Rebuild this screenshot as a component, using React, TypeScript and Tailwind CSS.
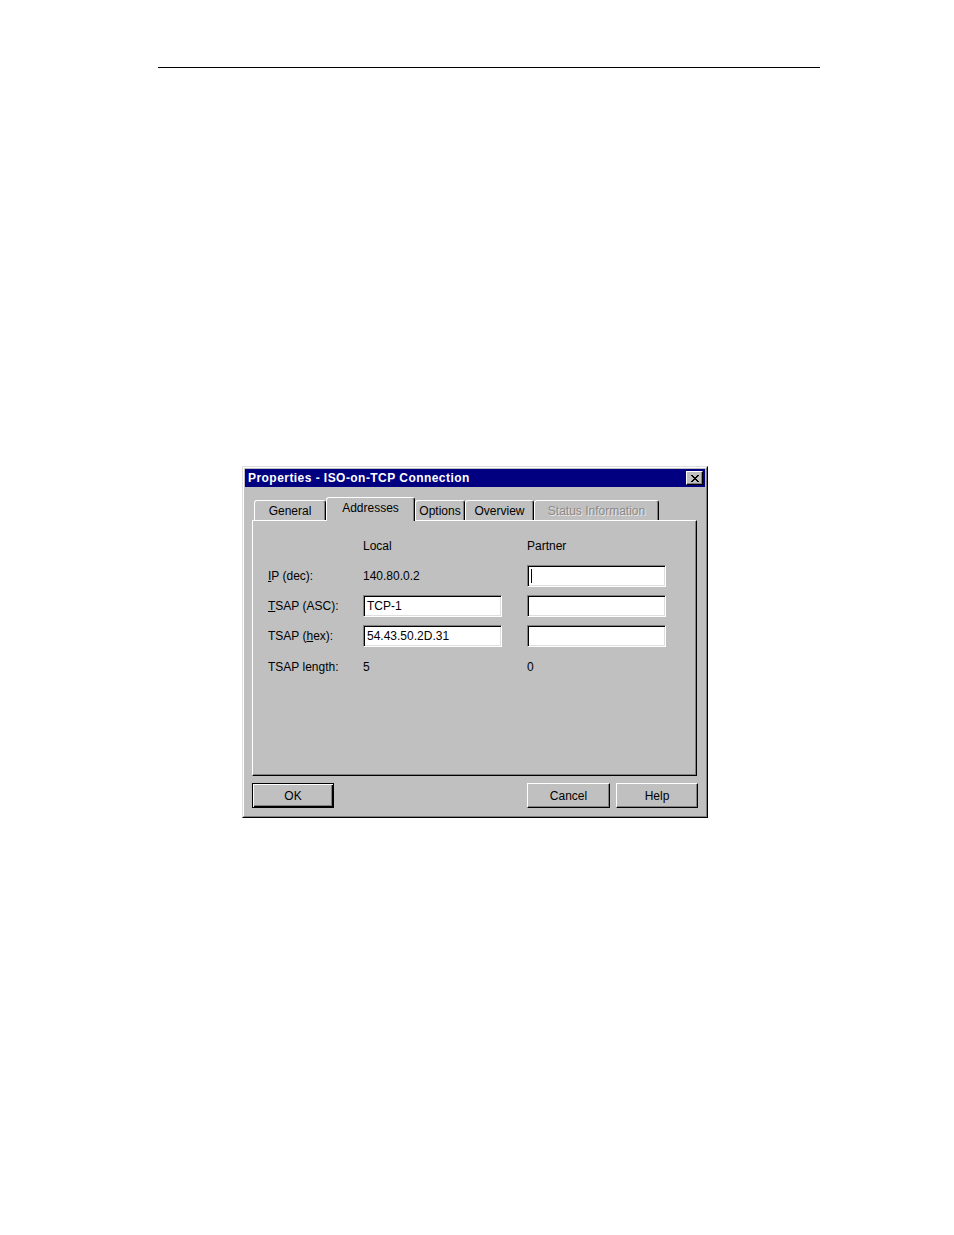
import React from 'react';

const font = 'font-["Liberation_Sans",Arial,sans-serif]';

function CloseGlyph() {
  // 8x7 pixel cross, the classic caption-button glyph
  const px = [
    [0, 0], [1, 0], [6, 0], [7, 0],
    [1, 1], [2, 1], [5, 1], [6, 1],
    [2, 2], [3, 2], [4, 2], [5, 2],
    [3, 3], [4, 3],
    [2, 4], [3, 4], [4, 4], [5, 4],
    [1, 5], [2, 5], [5, 5], [6, 5],
    [0, 6], [1, 6], [6, 6], [7, 6],
  ];
  return (
    <svg width="8" height="7" viewBox="0 0 8 7" shapeRendering="crispEdges">
      {px.map(([x, y]) => (
        <rect key={`${x}-${y}`} x={x} y={y} width="1" height="1" fill="#000" />
      ))}
    </svg>
  );
}

function Tab({ label, width, active, disabled }: { label: string; width: number; active?: boolean; disabled?: boolean }) {
  return (
    <div
      style={{ width }}
      className={[
        'flex shrink-0 items-center justify-center rounded-t-[3px] border-l border-t border-r border-l-white border-t-white border-r-black bg-[#c0c0c0] shadow-[inset_-1px_0_0_#808080]',
        active ? 'relative z-10 -mb-px h-[24px] pb-[3px]' : 'h-[20px] pt-[1px]',
        disabled ? 'text-[#8a8a8a] [text-shadow:1px_1px_0_#e8e8e8]' : 'text-black',
      ].join(' ')}
    >
      {label}
    </div>
  );
}

function Field({ value, caret }: { value?: string; caret?: boolean }) {
  return (
    <div className="flex h-[22px] w-[139px] items-center border border-t-[#808080] border-l-[#808080] border-r-white border-b-white bg-white pl-[3px] shadow-[inset_1px_1px_0_#000,inset_-1px_-1px_0_#dfdfdf]">
      {value}
      {caret && <span className="h-[14px] w-px bg-black" />}
    </div>
  );
}

function Button({ label, width, isDefault }: { label: string; width: number; isDefault?: boolean }) {
  return (
    <div
      style={{ width }}
      className={[
        'flex h-[25px] items-center justify-center bg-[#c0c0c0]',
        isDefault
          ? 'border border-black shadow-[inset_1px_1px_0_#fff,inset_-1px_-1px_0_#000,inset_-2px_-2px_0_#808080]'
          : 'border border-t-white border-l-white border-r-black border-b-black shadow-[inset_-1px_-1px_0_#808080]',
      ].join(' ')}
    >
      {label}
    </div>
  );
}

export default function App() {
  return (
    <div className={`min-h-[1235px] w-[954px] bg-white ${font} text-[12px] leading-none text-black`}>
      <div className="pl-[158px] pt-[67px]">
        <div className="h-px w-[662px] bg-black" />
      </div>

      <div className="ml-[242px] mt-[398px] w-[466px] border border-t-[#dfdfdf] border-l-[#dfdfdf] border-r-black border-b-black bg-[#c0c0c0]">
        <div className="flex h-[350px] flex-col border border-t-white border-l-white border-r-[#808080] border-b-[#808080] p-px">
          {/* caption */}
          <div className="flex h-[18px] shrink-0 items-center justify-between bg-[#000080] pl-[3px] pr-[2px]">
            <span className="text-[12px] font-bold tracking-[0.45px] text-white">Properties - ISO-on-TCP Connection</span>
            <div className="flex h-[14px] w-[17px] items-center justify-center border border-t-white border-l-white border-r-black border-b-black bg-[#c0c0c0] shadow-[inset_-1px_-1px_0_#808080]">
              <CloseGlyph />
            </div>
          </div>

          <div className="flex flex-1 flex-col pl-[7px] pr-[8px] pt-[10px]">
            {/* tabs */}
            <div className="flex h-[23px] items-end pl-[2px]">
              <Tab label="General" width={72} />
              <Tab label="Addresses" width={89} active />
              <Tab label="Options" width={50} />
              <Tab label="Overview" width={69} />
              <Tab label="Status Information" width={125} disabled />
            </div>

            {/* page */}
            <div className="h-[256px] w-[445px] border border-t-white border-l-white border-r-black border-b-black pl-[15px] pt-[15px] shadow-[inset_-1px_-1px_0_#808080]">
              <div className="flex h-[20px] items-center">
                <span className="ml-[95px] w-[164px]">Local</span>
                <span>Partner</span>
              </div>

              <div className="mt-[9px] flex flex-col gap-[8px]">
                <div className="flex h-[22px] items-center">
                  <span className="w-[95px]">
                    <u>I</u>P (dec):
                  </span>
                  <span className="w-[164px]">140.80.0.2</span>
                  <Field caret />
                </div>
                <div className="flex h-[22px] items-center">
                  <span className="w-[95px]">
                    <u>T</u>SAP (ASC):
                  </span>
                  <div className="w-[164px]">
                    <Field value="TCP-1" />
                  </div>
                  <Field />
                </div>
                <div className="flex h-[22px] items-center">
                  <span className="w-[95px]">
                    TSAP (<u>h</u>ex):
                  </span>
                  <div className="w-[164px]">
                    <Field value="54.43.50.2D.31" />
                  </div>
                  <Field />
                </div>
                <div className="flex h-[22px] items-center pt-[2px]">
                  <span className="w-[95px]">TSAP length:</span>
                  <span className="w-[164px]">5</span>
                  <span>0</span>
                </div>
              </div>
            </div>

            {/* buttons */}
            <div className="mr-[-1px] mt-[7px] flex">
              <Button label="OK" width={82} isDefault />
              <div className="ml-auto flex gap-[6px]">
                <Button label="Cancel" width={83} />
                <Button label="Help" width={82} />
              </div>
            </div>
          </div>
        </div>
      </div>
    </div>
  );
}
